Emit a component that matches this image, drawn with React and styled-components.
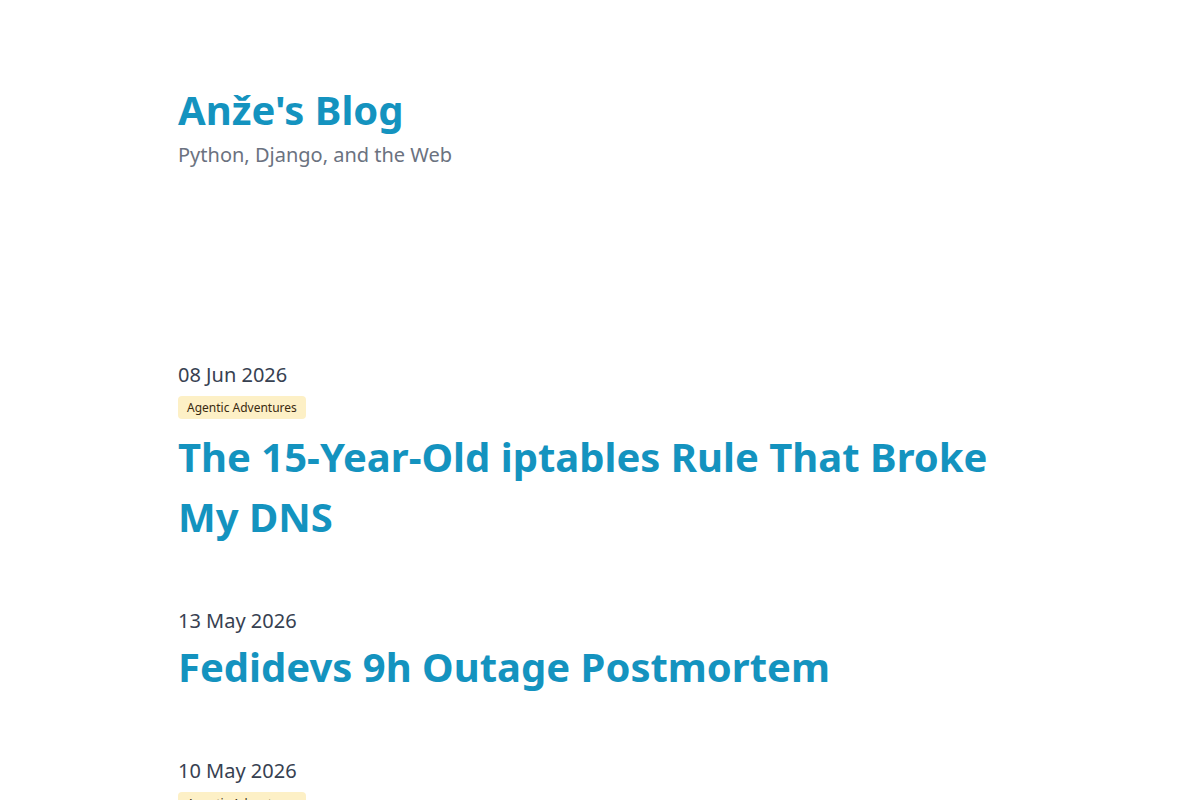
import React from 'react';
import styled, { createGlobalStyle } from 'styled-components';

const GlobalStyle = createGlobalStyle`
  body {
    margin: 0;
    background: #fff;
    font-family: "Noto Sans", "Open Sans", sans-serif;
  }
`;

const posts = [
  {
    date: '08 Jun 2026',
    tag: 'Agentic Adventures',
    title: 'The 15-Year-Old iptables Rule That Broke My DNS',
  },
  {
    date: '13 May 2026',
    title: 'Fedidevs 9h Outage Postmortem',
  },
  {
    date: '10 May 2026',
    tag: 'Agentic Adventures',
    title: 'Coming soon',
  },
];

const App = () => (
  <>
    <GlobalStyle />
    <Page>
      <Header>
        <SiteTitle href="#">Anže's Blog</SiteTitle>
        <Tagline>Python, Django, and the Web</Tagline>
      </Header>

      <PostList>
        {posts.map((post) => (
          <Post key={post.date}>
            <PostDate>{post.date}</PostDate>
            {post.tag && <Tag>{post.tag}</Tag>}
            <PostTitle href="#">{post.title}</PostTitle>
          </Post>
        ))}
      </PostList>
    </Page>
  </>
);

export default App;

const Page = styled.div`
  width: 844px;
  margin: 0 auto;
  padding-top: 84px;
`;

const Header = styled.header`
  display: flex;
  flex-direction: column;
`;

const SiteTitle = styled.a`
  font-size: 40px;
  font-weight: 700;
  line-height: 52px;
  color: #1493bf;
  text-decoration: none;
`;

const Tagline = styled.p`
  margin: 5px 0 0;
  font-size: 20px;
  line-height: 28px;
  color: #6b7280;
`;

const PostList = styled.main`
  display: flex;
  flex-direction: column;
  gap: 60px;
  margin-top: 192px;
`;

const Post = styled.article`
  display: flex;
  flex-direction: column;
  align-items: flex-start;
`;

const PostDate = styled.time`
  font-size: 20px;
  line-height: 28px;
  color: #374151;
`;

const Tag = styled.span`
  margin: 7px 0 6px;
  padding: 3px 9px;
  border-radius: 4px;
  background: #fdf0c6;
  color: #3b2a10;
  font-size: 12px;
  line-height: 17px;
`;

const PostTitle = styled.a`
  margin-top: 2px;
  font-size: 40px;
  font-weight: 700;
  line-height: 60px;
  color: #1493bf;
  text-decoration: none;
`;
